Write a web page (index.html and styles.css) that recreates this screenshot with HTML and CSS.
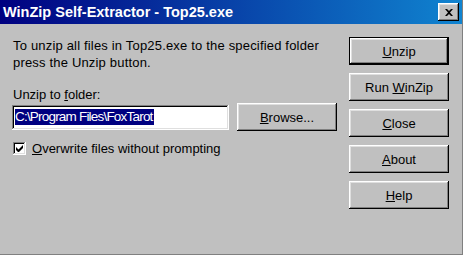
FILE: index.html
```html
<!DOCTYPE html>
<html lang="en">
  <head>
    <meta charset="UTF-8" />
    <meta name="viewport" content="width=device-width, initial-scale=1.0" />
    <title>WinZip Self-Extractor - Top25.exe</title>
    <link rel="stylesheet" href="styles.css">
  </head>
  <body>
    <div class="window">
      <div class="titlebar">
        <span class="title">WinZip Self-Extractor - Top25.exe</span>
        <button type="button" class="close" aria-label="Close">
          <svg width="8" height="7" viewBox="0 0 8 7">
            <path d="M0 0h2l2 2 2-2h2L5 3.5 8 7H6L4 5 2 7H0l3-3.5z" fill="#000" />
          </svg>
        </button>
      </div>

      <div class="content">
        <div class="main">
          <p class="intro">To unzip all files in Top25.exe to the specified folder<br>press the Unzip button.</p>

          <div class="folder-label">Unzip to <u>f</u>older:</div>
          <div class="folder-row">
            <div class="field"><span class="selected">C:\Program Files\FoxTarot</span></div>
            <button type="button" class="btn"><u>B</u>rowse...</button>
          </div>

          <label class="check-row">
            <span class="checkbox">
              <svg width="7" height="7" viewBox="0 0 7 7">
                <path d="M0 2v3l2 2h1l4-4V0L2.5 4.5z" fill="#000" />
              </svg>
            </span>
            <span><u>O</u>verwrite files without prompting</span>
          </label>
        </div>

        <div class="actions">
          <button type="button" class="btn btn--default"><u>U</u>nzip</button>
          <button type="button" class="btn">Run <u>W</u>inZip</button>
          <button type="button" class="btn"><u>C</u>lose</button>
          <button type="button" class="btn"><u>A</u>bout</button>
          <button type="button" class="btn"><u>H</u>elp</button>
        </div>
      </div>
    </div>
  </body>
</html>
```

FILE: styles.css
```css
body {
  margin: 0;
  font-family: "Liberation Sans", Arial, sans-serif;
  font-size: 13px;
  color: #000;
}

.window {
  width: 463px;
  height: 255px;
  box-sizing: border-box;
  background-color: #c0c0c0;
  border-right: 1px solid #808080;
  border-bottom: 1px solid #808080;
  display: flex;
  flex-direction: column;
}

/* Title bar */
.titlebar {
  height: 24px;
  display: flex;
  align-items: center;
  padding-left: 3px;
  padding-right: 3px;
  background: linear-gradient(to right, #000080, #1084d0);
}

.title {
  flex: 1;
  color: #fff;
  font-weight: bold;
  font-size: 14.5px;
}

.close {
  width: 21px;
  height: 18px;
  padding: 0;
  border: none;
  display: flex;
  align-items: center;
  justify-content: center;
  background-color: #c0c0c0;
  box-shadow: inset -1px -1px #000, inset 1px 1px #fff,
    inset -2px -2px #808080, inset 2px 2px #dfdfdf;
}

/* Body */
.content {
  flex: 1;
  display: flex;
  padding: 13px 13px 0 12px;
}

.main {
  flex: 1;
}

.intro {
  margin: 0 0 0 1px;
  line-height: 17px;
  letter-spacing: 0.18px;
}

.folder-label {
  margin: 16px 0 0 1px;
  line-height: 16px;
}

.folder-row {
  display: flex;
  align-items: center;
  gap: 8px;
}

.field {
  width: 217px;
  height: 25px;
  box-sizing: border-box;
  padding: 3px;
  background-color: #fff;
  box-shadow: inset -1px -1px #fff, inset 1px 1px #808080,
    inset -2px -2px #dfdfdf, inset 2px 2px #000;
  display: flex;
  align-items: center;
}

.selected {
  background-color: #000080;
  color: #fff;
  font-size: 13.5px;
  line-height: 16px;
  letter-spacing: -0.8px;
  padding-right: 1px;
}

.check-row {
  display: flex;
  align-items: center;
  gap: 6px;
  margin: 10px 0 0 1px;
}

.checkbox {
  width: 13px;
  height: 13px;
  box-sizing: border-box;
  background-color: #fff;
  box-shadow: inset -1px -1px #fff, inset 1px 1px #808080,
    inset -2px -2px #dfdfdf, inset 2px 2px #000;
  display: flex;
  align-items: center;
  justify-content: center;
}

/* Buttons */
.actions {
  width: 100px;
  display: flex;
  flex-direction: column;
  gap: 8px;
}

.btn {
  width: 100px;
  height: 28px;
  padding: 0;
  border: none;
  font-family: inherit;
  font-size: 13px;
  color: #000;
  background-color: #c0c0c0;
  box-shadow: inset -1px -1px #000, inset 1px 1px #fff,
    inset -2px -2px #808080, inset 2px 2px #dfdfdf;
}

.btn--default {
  box-shadow: inset 0 0 0 1px #000, inset -2px -2px #000, inset 2px 2px #fff,
    inset -3px -3px #808080, inset 3px 3px #dfdfdf;
}
```
